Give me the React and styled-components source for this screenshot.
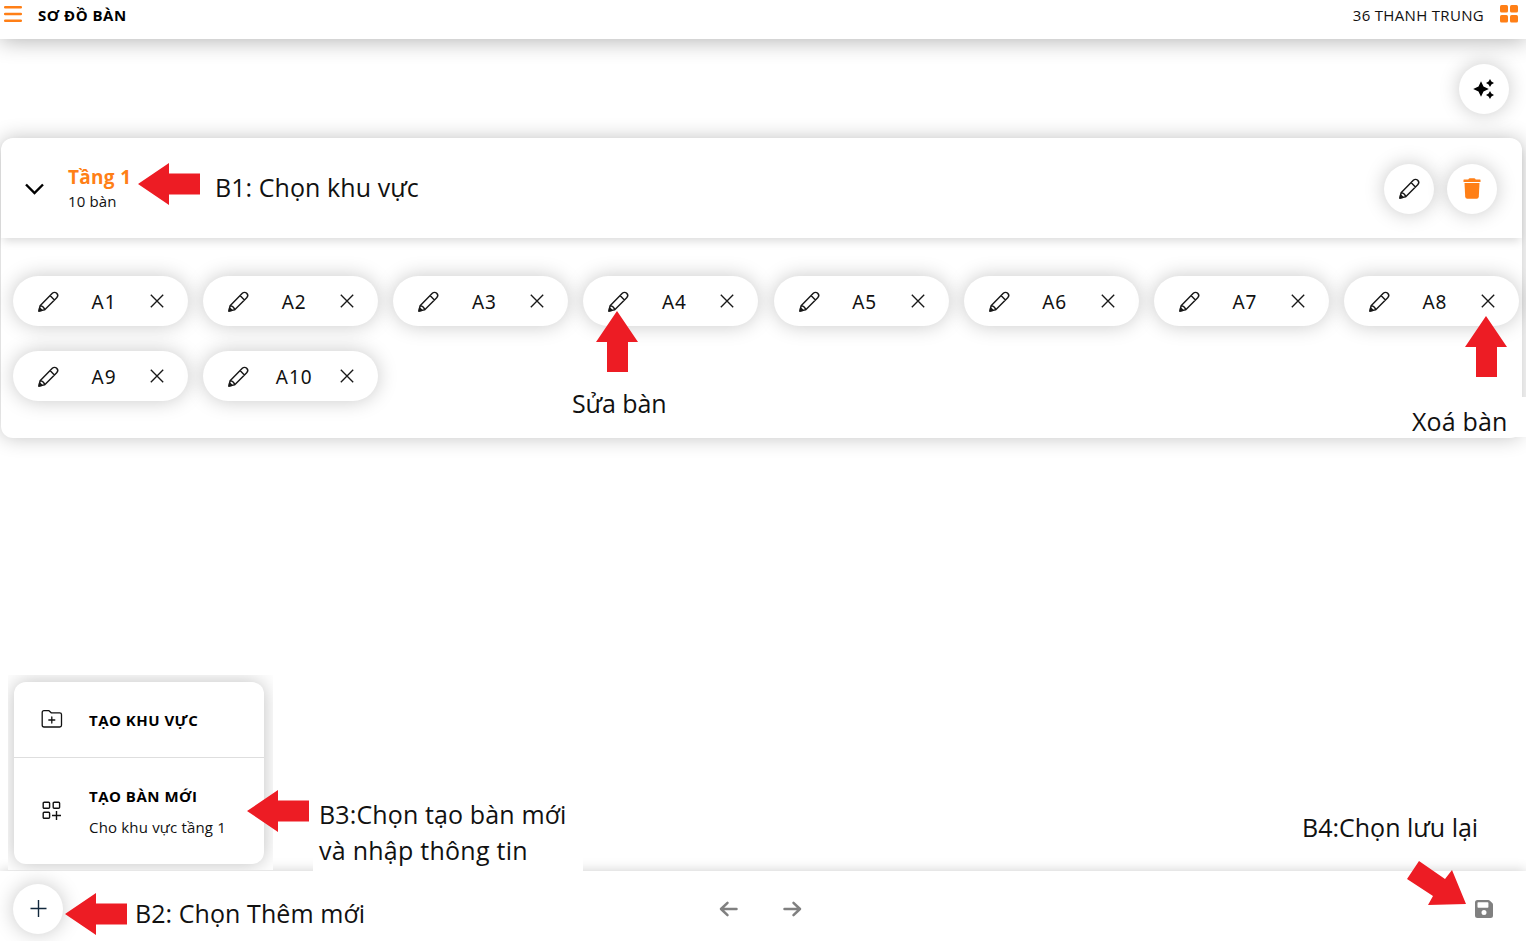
import React from 'react';
import styled, { createGlobalStyle, css } from 'styled-components';

const Global = createGlobalStyle`
  * { box-sizing: border-box; }
  body { margin: 0; background: #fff; color: #111; overflow: hidden; font-family: "Noto Sans", "Open Sans", sans-serif; }
  svg { display: block; flex: none; overflow: visible; }
`;
const Screen = styled.div`
  position: relative; width: 1526px; height: 941px; overflow: hidden;
  display: flex; flex-direction: column; background: #fff;
`;
const Header = styled.header`
  height: 39px; padding: 0 8px 0 4px; display: flex; align-items: flex-start; justify-content: space-between;
  background: #fff; box-shadow: 0 2px 22px rgba(0,0,0,.3); z-index: 1;
`;
const HeaderSide = styled.div`
  display: flex; align-items: center; gap: 16px; height: 30px;
`;
const Line = styled.span`
  display: block; white-space: pre; font-family: "Open Sans", "Noto Sans", sans-serif;
  font-size: ${p => p.$size}px; line-height: ${p => p.$lh || 20}px; font-weight: ${p => p.$weight || 400};
  letter-spacing: ${p => p.$ls || 0}px; color: ${p => p.$color || '#111'};
`;
const HeaderIcon = styled.span`height: 27px; display: flex; align-items: center; align-self: flex-start;`;
const Content = styled.main`flex: 1; display: flex; flex-direction: column;`;
const Tools = styled.div`height: 99.4px; padding: 25px 17px 0; display: flex; justify-content: flex-end;`;
const Round = styled.button`
  width: 50px; height: 50px; border: 0; border-radius: 50%; background: #fff; padding: 0;
  display: flex; align-items: center; justify-content: center; color: #111;
  box-shadow: 0 0 20px rgba(0,0,0,.22);
`;
const Area = styled.section`
  margin: 0 4px 0 1px; height: 299.6px; border-radius: 12px; background: #fff;
  box-shadow: 0 0 20px rgba(0,0,0,.24);
`;
const AreaHead = styled.div`
  height: 100px; padding: 1px 25px 0 23px; display: flex; align-items: center;
  border-radius: 12px 12px 0 0; box-shadow: 0 5px 10px -2px rgba(0,0,0,.15);
`;
const AreaName = styled.div`margin-left: 23px; flex: 1; padding-top: 1px;`;
const Actions = styled.div`display: flex; gap: 13px;`;
const Tables = styled.div`
  padding: 38px 0 0 12px; display: grid; grid-template-columns: repeat(8, 175px);
  column-gap: 15.15px; row-gap: 25px;
`;
const Table = styled.div`
  height: 50px; border-radius: 25px; background: #fff; box-shadow: 0 0 20px rgba(0,0,0,.22);
  display: flex; align-items: center; padding: 0 24px 0 25px;
`;
const TableName = styled.span`
  flex: 1; text-align: center; font: 400 19px/25px "Noto Sans", sans-serif; letter-spacing: .9px;
  padding: 2px 1px 0 0; color: #111;
`;
const Footer = styled.footer`
  height: 70px; padding: 5px 33px 0 13px; display: flex; align-items: center; justify-content: space-between;
  background: #fff; box-shadow: 0 0 12px rgba(0,0,0,.2);
  & > * { flex: none; }
`;
const History = styled.div`display: flex; gap: 43px; margin-left: -17px;`;
const Popup = styled.div`
  position: absolute; left: 8px; top: 675px; width: 265px; height: 195px; overflow: hidden;
  padding: 7px 9px 6px 6px; background: #fff; display: flex;
`;
const Menu = styled.div`
  flex: 1; border-radius: 12px; background: #fff; box-shadow: 0 0 20px rgba(0,0,0,.25);
`;
const MenuItem = styled.div`
  height: ${p => p.$h}px; display: flex; align-items: center; padding-left: 27px; gap: 27px;
  ${p => p.$divided && css`border-bottom: 1px solid #dedede;`}
`;
const MenuText = styled.div`padding-top: 1px;`;
const MenuIcon = styled.span`width: 21px; height: 20px;`;
const Note = styled.div`
  position: absolute; left: ${p => p.$x}px; top: ${p => p.$y}px;
  ${p => p.$w && css`width: ${p.$w}px; height: ${p.$h}px; background: #fff;`}
  padding: ${p => p.$pad || 0};
`;
const ArrowBox = styled.svg`position: absolute; left: ${p => p.$x}px; top: ${p => p.$y}px; fill: #ed1c24;`;

const Pencil = () => (
  <svg width="21" height="21" viewBox="0 0 22 22" fill="none" stroke="#181818" strokeWidth="1.5" strokeLinejoin="round">
    <path d="M1 21 2.200 15.400 15 2.400a3.200 3.200 0 0 1 4.600 4.600L6.800 19.800Z M12.600 4.800l4.600 4.600 M2.200 15.400c2.400.2 4.300 2 4.600 4.400" />
    <path d="M1 21l.7-3.200 2.500 2.500z" fill="#181818" />
  </svg>
);
const Cross = () => (
  <svg width="14" height="14" viewBox="0 0 14 14" stroke="#181818" strokeWidth="1.35"><path d="M.8.8l12.4 12.4M13.2.8.8 13.2" /></svg>
);
const Burger = () => (
  <svg width="18" height="16" viewBox="0 0 18 16" stroke="#ff7f16" strokeWidth="2.5" strokeLinecap="round"><path d="M1.2 1.3h15.6M1.2 8h15.6M1.2 14.7h15.6" /></svg>
);
const Grid = () => (
  <svg width="18" height="18" viewBox="0 0 18 18" fill="#ff7f16">
    {[[0, 0], [10, 0], [0, 10], [10, 10]].map(([x, y]) => <rect key={`${x}-${y}`} x={x} y={y} width="8" height="7.500" rx="1.600" />)}
  </svg>
);
const Sparkles = () => (
  <svg width="22" height="20" viewBox="0 0 22 20" fill="#000">
    <path d="M8 2.200l2.500 5.300L15.800 10l-5.300 2.500L8 17.800l-2.500-5.300L.2 10l5.300-2.500z" />
    <path d="M17 0l1.400 2.600L21 4l-2.600 1.400L17 8l-1.400-2.600L13 4l2.600-1.400z" />
    <path d="M17 12l1.400 2.600L21 16l-2.600 1.400L17 20l-1.400-2.600L13 16l2.600-1.400z" />
  </svg>
);
const Trash = () => (
  <svg width="18" height="21" viewBox="0 0 18 21" fill="#ff7f16">
    <path d="M1 1.600H5.300Q5.800.3 7 .3H11Q12.200.3 12.700 1.600H17Q17.500 1.600 17.500 2.100V3.900H.5V2.100Q.5 1.600 1 1.600Z" />
    <path d="M1.500 5H16.500L15.800 18.700Q15.600 20.700 13.700 20.700H4.300Q2.400 20.700 2.200 18.700Z" />
  </svg>
);
const FolderPlus = () => (
  <svg width="21" height="18" viewBox="0 0 21 18" fill="none" stroke="#111" strokeWidth="1.300" strokeLinecap="round" strokeLinejoin="round">
    <path d="M1.200 2.500Q1.200.700 3 .7H8L10.200 2.800H18.700Q20.500 2.800 20.500 4.600V15.200Q20.500 17 18.700 17H3Q1.200 17 1.200 15.200ZM10.800 7v6M7.800 10h6" />
  </svg>
);
const GridPlus = () => (
  <svg width="20" height="19" viewBox="0 0 20 19" fill="none" stroke="#111" strokeWidth="1.400">
    <rect x="2.200" y="1.200" width="6.400" height="6" rx="1" /><rect x="12.200" y="1.200" width="6.400" height="6" rx="1" />
    <rect x="2.200" y="11.200" width="6.400" height="6" rx="1" /><path d="M15.500 10v9M11 14.500h9" />
  </svg>
);
const Plus = () => (
  <svg width="17" height="17" viewBox="0 0 17 17" stroke="#12283d" strokeWidth="1.400"><path d="M8.500 0v17M.5 8.500h16" /></svg>
);
const Step = ({ next }) => (
  <svg width="20" height="16" viewBox="0 0 20 16" fill="none" stroke="#808080" strokeWidth="2.500" strokeLinecap="round" strokeLinejoin="round">
    <path d={next ? 'M2.500 8h15.500M11.500 1.800 18 8l-6.500 6.200' : 'M17.500 8H2M8.500 1.800 2 8l6.500 6.200'} />
  </svg>
);
const Save = () => (
  <svg width="18" height="18" viewBox="0 0 18 18" fill="#808080">
    <path fillRule="evenodd" d="M2.500 0h10.700q1 0 1.700.7l2.400 2.400q.7.700.7 1.700v10.700q0 2.500-2.500 2.500h-13Q0 18 0 15.500v-13Q0 0 2.500 0ZM3.200 2.300q-.7 0-.7.700v4q0 .7.700.7h9.500q.7 0 .7-.7V3q0-.7-.7-.7ZM9 9.900a2.500 2.500 0 1 0 0 5 2.500 2.500 0 0 0 0-5Z" />
  </svg>
);
const LeftArrow = ({ x, y }) => (
  <ArrowBox $x={x} $y={y} width="62" height="42" viewBox="0 0 62 42"><path d="M0 21 31 0v10.500h31v21H31V42z" /></ArrowBox>
);
const UpArrow = ({ x, y }) => (
  <ArrowBox $x={x} $y={y} width="42" height="61" viewBox="0 0 42 61"><path d="M21 0 42 31H32v30H11V31H0z" /></ArrowBox>
);

const names = ['A1', 'A2', 'A3', 'A4', 'A5', 'A6', 'A7', 'A8', 'A9', 'A10'];

export default function App() {
  return (
    <Screen>
      <Global />
      <Header>
        <HeaderSide>
          <HeaderIcon><Burger /></HeaderIcon>
          <Line $size={15} $weight={700} $ls={0.5} $color="#000">SƠ ĐỒ BÀN</Line>
        </HeaderSide>
        <HeaderSide>
          <Line $size={15} $ls={0.32}>36 THANH TRUNG</Line>
          <HeaderIcon><Grid /></HeaderIcon>
        </HeaderSide>
      </Header>
      <Content>
        <Tools><Round><Sparkles /></Round></Tools>
        <Area>
          <AreaHead>
            <svg width="21" height="12" viewBox="0 0 21 12" fill="none" stroke="#000" strokeWidth="2.400"><path d="M2 1.500l8.500 8.500L19 1.500" /></svg>
            <AreaName>
              <Line $size={19} $lh={25} $weight={700} $ls={0.3} $color="#ff7f16">Tầng 1</Line>
              <Line $size={15} $lh={23} $ls={0.15}>10 bàn</Line>
            </AreaName>
            <Actions><Round><Pencil /></Round><Round><Trash /></Round></Actions>
          </AreaHead>
          <Tables>
            {names.map(n => <Table key={n}><Pencil /><TableName>{n}</TableName><Cross /></Table>)}
          </Tables>
        </Area>
      </Content>
      <Footer>
        <Round><Plus /></Round>
        <History><Step /><Step next /></History>
        <Save />
      </Footer>

      <Popup>
        <Menu>
          <MenuItem $h={76} $divided>
            <MenuIcon><FolderPlus /></MenuIcon>
            <Line $size={15} $weight={700} $ls={0.48} $color="#000">TẠO KHU VỰC</Line>
          </MenuItem>
          <MenuItem $h={106}>
            <MenuIcon><GridPlus /></MenuIcon>
            <MenuText>
              <Line $size={15} $lh={31} $weight={700} $ls={0.5} $color="#000">TẠO BÀN MỚI</Line>
              <Line $size={15} $lh={31} $ls={0.18}>Cho khu vực tầng 1</Line>
            </MenuText>
          </MenuItem>
        </Menu>
      </Popup>

      <LeftArrow x={138} y={163} />
      <Note $x={215} $y={169}><Line $size={25} $lh={36} $ls={0.07}>B1: Chọn khu vực</Line></Note>
      <UpArrow x={596} y={311} />
      <Note $x={572} $y={385}><Line $size={25} $lh={36} $ls={-0.1}>Sửa bàn</Line></Note>
      <UpArrow x={1465} y={316} />
      <Note $x={1405} $y={397} $w={121} $h={40} $pad="6px 0 0 7px"><Line $size={25} $lh={36} $ls={0.15}>Xoá bàn</Line></Note>
      <LeftArrow x={65} y={893} />
      <Note $x={135} $y={895}><Line $size={25} $lh={36} $ls={0.07}>B2: Chọn Thêm mới</Line></Note>
      <LeftArrow x={247} y={790} />
      <Note $x={313} $y={790} $w={270} $h={85} $pad="6px 0 0 6px">
        <Line $size={25} $lh={36} $ls={0.13}>B3:Chọn tạo bàn mới</Line>
        <Line $size={25} $lh={36} $ls={0.26}>và nhập thông tin</Line>
      </Note>
      <Note $x={1302} $y={809}><Line $size={25} $lh={36}>B4:Chọn lưu lại</Line></Note>
      <ArrowBox $x={1407} $y={861} width="60" height="44" viewBox="0 0 60 44"><path d="M12 0 38 18 45 9 59 43 21 44 26 35 0 18z" /></ArrowBox>
    </Screen>
  );
}
